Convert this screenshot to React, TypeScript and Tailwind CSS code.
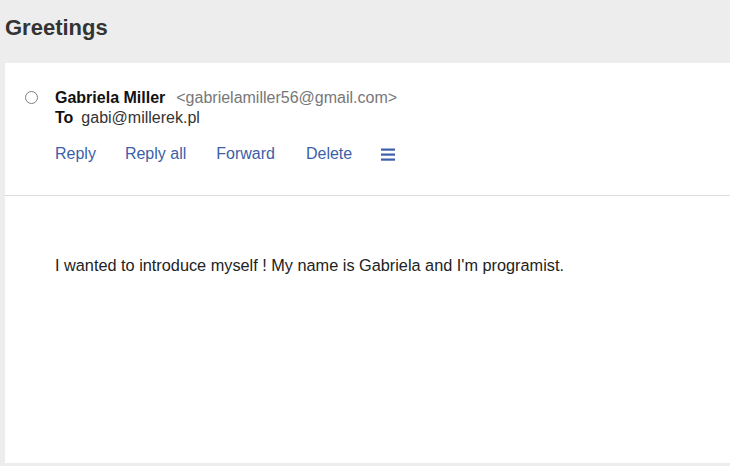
import React from "react";

export default function App() {
  return (
    <div
      className="w-[730px] h-[466px] bg-[#ededed] pl-[5px] pb-[3px] flex flex-col"
      style={{ fontFamily: '"Liberation Sans", Arial, sans-serif' }}
    >
      <div className="h-[63px] pt-[15px] shrink-0">
        <h1 className="text-[22px] leading-[25px] font-bold text-[#333]">Greetings</h1>
      </div>
      <div className="flex-1 bg-white flex flex-col">
        <div className="pt-[25px] pb-[31px] pl-[20px] flex items-start border-b border-[#dddddd]">
          <div className="mt-[3px] w-[13px] h-[13px] rounded-full border border-[#808080] shrink-0" />
          <div className="ml-[17px] flex flex-col">
            <div className="text-[16px] leading-[20px] flex">
              <span className="font-bold text-[#111]">Gabriela Miller</span>
              <span className="ml-[11px] text-[#777]">&lt;gabrielamiller56@gmail.com&gt;</span>
            </div>
            <div className="text-[16px] leading-[20px] flex">
              <span className="font-bold text-[#111]">To</span>
              <span className="ml-[8px] text-[#333]">gabi@millerek.pl</span>
            </div>
            <div className="mt-[16px] flex items-center text-[16px] leading-[20px] text-[#3c5fa8]">
              <span>Reply</span>
              <span className="ml-[29px]">Reply all</span>
              <span className="ml-[30px]">Forward</span>
              <span className="ml-[31px]">Delete</span>
              <svg width="14" height="13" viewBox="0 0 14 13" className="ml-[29px] mt-[1px]">
                <rect x="0" y="0.5" width="14" height="2.2" fill="#3c5fa8" />
                <rect x="0" y="5.5" width="14" height="2.2" fill="#3c5fa8" />
                <rect x="0" y="10.5" width="14" height="2.2" fill="#3c5fa8" />
              </svg>
            </div>
          </div>
        </div>
        <div className="pt-[59px] pl-[50px] text-[16.3px] leading-[20px] text-[#222]">
          I wanted to introduce myself ! My name is Gabriela and I'm programist.
        </div>
      </div>
    </div>
  );
}
